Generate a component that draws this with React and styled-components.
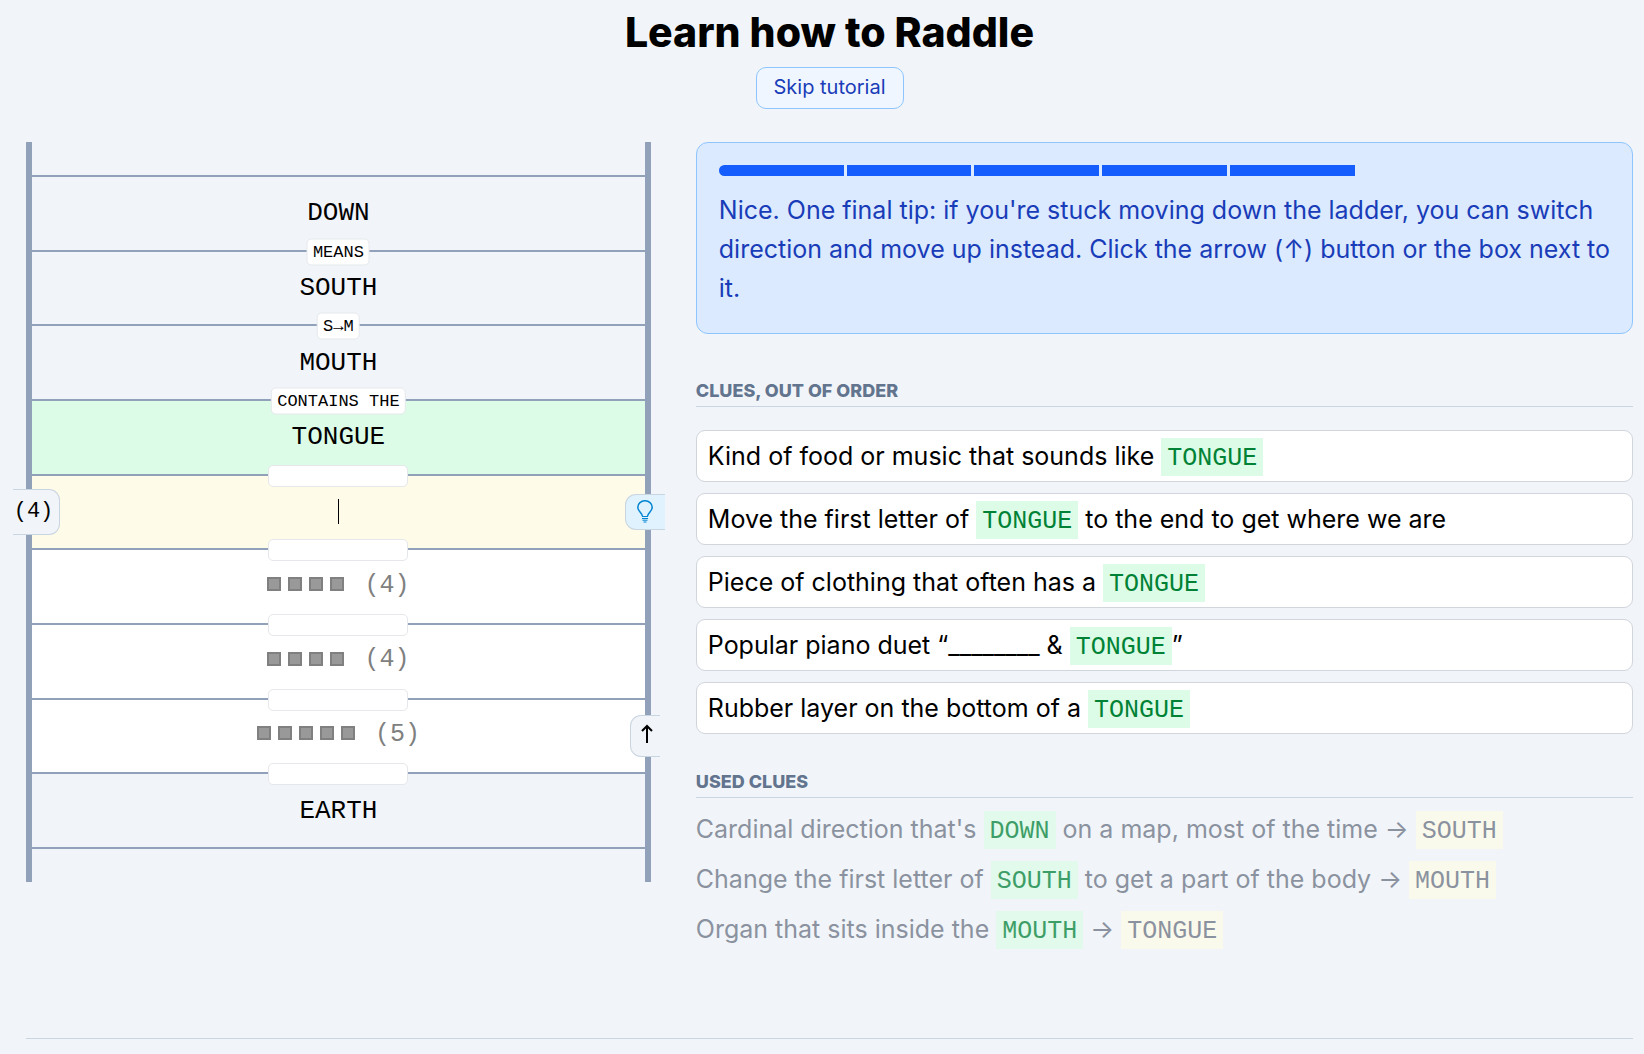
import React from "react";
import styled, { createGlobalStyle, css } from "styled-components";

const sans = `Inter, "Liberation Sans", sans-serif`;
const mono = `"Liberation Mono", monospace`;

const GlobalStyle = createGlobalStyle`
  *, *::before, *::after { box-sizing: border-box; }
  body {
    margin: 0;
    background: #f1f5f9;
    color: #000;
    font-family: ${sans};
  }
`;

const Page = styled.div`
  padding: 8px 11px 0 26px;
`;

const Header = styled.header`
  display: flex;
  flex-direction: column;
  align-items: center;
  gap: 11px;
`;

const Title = styled.h1`
  margin: 0;
  font-size: 41px;
  line-height: 48px;
  font-weight: 800;
`;

const SkipButton = styled.button`
  height: 42px;
  padding: 0 17px 2px;
  border: 1px solid #8ec5ff;
  border-radius: 10px;
  background: #eff6ff;
  color: #193cb8;
  font-family: inherit;
  font-size: 20px;
  line-height: 24px;
`;

const Columns = styled.main`
  display: grid;
  grid-template-columns: 2fr 3fr;
  gap: 45px;
  align-items: start;
  margin-top: 33px;
  padding-bottom: 84px;
  border-bottom: 1px solid #cad5e2;
`;

const Ladder = styled.ol`
  display: grid;
  grid-template-rows: 35px repeat(9, 1fr) 33px;
  height: 740px;
  margin: 0;
  padding: 0;
  border: solid #90a1b9;
  border-width: 0 6px;
  list-style: none;
  font-family: ${mono};
  font-size: 26px;
  line-height: 30px;

  &::before {
    content: "";
    border-bottom: 2px solid #90a1b9;
  }
`;

const rungColors = { plain: "transparent", known: "#dcfce7", active: "#fefce8", blank: "#fff" };

const Rung = styled.li`
  position: relative;
  display: flex;
  align-items: center;
  justify-content: center;
  border-bottom: 2px solid #90a1b9;
  background: ${(p) => rungColors[p.$kind]};
`;

const Relation = styled.span`
  position: absolute;
  top: 0;
  left: 50%;
  transform: translate(-50%, -50%);
  z-index: 1;
  display: block;
  border: 1px solid #e5e7eb;
  border-radius: 5px;
  background: #fff;
  font-size: 17px;
  line-height: 25px;
  white-space: pre;
  ${(p) =>
    p.$empty
      ? css`
          width: 140px;
          height: 22px;
        `
      : css`
          padding: 0 5px;
        `}
`;

const Blank = styled.span`
  display: flex;
  align-items: center;
  gap: 20px;
  padding-bottom: 2px;
  color: #808080;
  font-size: 25px;
`;

const Squares = styled.span`
  display: flex;
  gap: 7px;
  padding-bottom: 3px;
`;

const Square = styled.span`
  width: 14px;
  height: 14px;
  border: 2px solid #808080;
  background: #999;
`;

const Guess = styled.input`
  width: 100%;
  height: 100%;
  border: 0;
  outline: 0;
  background: transparent;
  font: inherit;
  text-align: center;
  text-transform: uppercase;
  caret-color: transparent;
`;

const Caret = styled.span`
  position: absolute;
  left: 50%;
  width: 1px;
  height: 25px;
  background: #000;
`;

const tab = css`
  position: absolute;
  z-index: 2;
  display: flex;
  align-items: center;
  justify-content: center;
  border: 1px solid #cad5e2;
  background: #f1f5f9;
  color: #000;
`;

const LengthTab = styled.span`
  ${tab}
  left: -19px;
  width: 47px;
  height: 46px;
  padding-right: 5px;
  border-left: 0;
  border-radius: 0 11px 11px 0;
  font-size: 22px;
`;

const SideTab = styled.button`
  ${tab}
  padding: 0;
  border-right: 0;
  border-radius: 11px 0 0 11px;
`;

const HintButton = styled(SideTab)`
  right: -20px;
  width: 40px;
  height: 36px;
  background: #dff2fe;
  color: #0084d1;
`;

const DirectionButton = styled(SideTab)`
  right: -15px;
  width: 30px;
  height: 42px;
  padding: 0 0 4px 3px;
`;

const Tip = styled.section`
  padding: 22px 14px 25px 22px;
  border: 1px solid #8ec5ff;
  border-radius: 12px;
  background: #dbeafe;
  color: #193cb8;
`;

const Progress = styled.div`
  display: grid;
  grid-template-columns: repeat(7, 1fr);
  gap: 3px;
  height: 11px;
  margin-right: 8px;
  border-radius: 6px;
  overflow: hidden;
`;

const Step = styled.span`
  background: ${(p) => (p.$done ? "#155dfc" : "transparent")};
`;

const TipText = styled.p`
  margin: 15px 0 0;
  font-size: 25px;
  line-height: 39px;
`;

const SectionTitle = styled.h2`
  margin: ${(p) => (p.$compact ? 36 : 45)}px 0 0;
  padding-bottom: 3px;
  border-bottom: 1px solid #cad5e2;
  color: #62748e;
  font-size: 18px;
  line-height: 24px;
  font-weight: 800;
  text-transform: uppercase;
`;

const ClueList = styled.ul`
  display: grid;
  gap: 11px;
  margin: 23px 0 0;
  padding: 0;
  list-style: none;
  font-size: 25px;
  line-height: 50px;
`;

const Clue = styled.li`
  padding: 0 11px;
  border: 1px solid #d1d5dc;
  border-radius: 9px;
  background: #fff;
`;

const UsedList = styled.ul`
  margin: 6px 0 0;
  padding: 0;
  list-style: none;
  font-size: 25px;
  line-height: 50px;
  color: #6a7282;
  opacity: 0.75;
`;

const Word = styled.span`
  display: inline-block;
  padding: 4px 6px 0;
  background: ${(p) => (p.$answer ? "#fefce8" : "#dcfce7")};
  color: ${(p) => (p.$answer ? "inherit" : "#008236")};
  font-family: ${mono};
  line-height: 34px;
`;

const rungs = [
  { word: "DOWN" },
  { word: "SOUTH", relation: "MEANS" },
  { word: "MOUTH", relation: "S→M" },
  { word: "TONGUE", relation: "CONTAINS THE", kind: "known" },
  { relation: "", kind: "active", size: 4 },
  { relation: "", kind: "blank", size: 4 },
  { relation: "", kind: "blank", size: 4 },
  { relation: "", kind: "blank", size: 5, reverse: true },
  { word: "EARTH", relation: "" },
];

const clues = [
  ["Kind of food or music that sounds like ", ""],
  ["Move the first letter of ", " to the end to get where we are"],
  ["Piece of clothing that often has a ", ""],
  ["Popular piano duet “________ & ", "”"],
  ["Rubber layer on the bottom of a ", ""],
];

const usedClues = [
  ["Cardinal direction that's ", "DOWN", " on a map, most of the time → ", "SOUTH"],
  ["Change the first letter of ", "SOUTH", " to get a part of the body → ", "MOUTH"],
  ["Organ that sits inside the ", "MOUTH", " → ", "TONGUE"],
];

function UpArrow() {
  return (
    <svg width="12" height="20" viewBox="0 0 12 20" fill="none" stroke="currentColor" strokeWidth="2">
      <path d="M6 19V2M1 7l5-5 5 5" />
    </svg>
  );
}

function Bulb() {
  return (
    <svg width="16" height="23" viewBox="0 0 16 23" fill="none" stroke="currentColor">
      <path
        strokeWidth="1.5"
        d="M5.4 16.2c0-3-4.6-4.6-4.6-9A7 6.5 0 0 1 8 .8a7 6.5 0 0 1 7.2 6.4c0 4.4-4.6 6-4.6 9"
      />
      <path d="M5 16.5h6M5 18.5h6M5.5 20.2h5M6.500 22h3" />
    </svg>
  );
}

function RungContent({ rung }) {
  if (rung.kind === "active") {
    return (
      <>
        <LengthTab>({rung.size})</LengthTab>
        <Guess aria-label="Your guess" maxLength={rung.size} />
        <Caret />
        <HintButton type="button" aria-label="Hint">
          <Bulb />
        </HintButton>
      </>
    );
  }
  if (rung.kind === "blank") {
    return (
      <Blank>
        <Squares>
          {Array.from({ length: rung.size }, (_, i) => (
            <Square key={i} />
          ))}
        </Squares>
        ({rung.size})
      </Blank>
    );
  }
  return rung.word;
}

export default function App() {
  return (
    <>
      <GlobalStyle />
      <Page>
        <Header>
          <Title>Learn how to Raddle</Title>
          <SkipButton type="button">Skip tutorial</SkipButton>
        </Header>
        <Columns>
          <Ladder>
            {rungs.map((rung, i) => (
              <Rung key={i} $kind={rung.kind || "plain"}>
                {rung.relation !== undefined && (
                  <Relation $empty={!rung.relation}>{rung.relation}</Relation>
                )}
                <RungContent rung={rung} />
                {rung.reverse && (
                  <DirectionButton type="button" aria-label="Move up">
                    <UpArrow />
                  </DirectionButton>
                )}
              </Rung>
            ))}
          </Ladder>
          <div>
            <Tip>
              <Progress>
                {Array.from({ length: 7 }, (_, i) => (
                  <Step key={i} $done={i < 5} />
                ))}
              </Progress>
              <TipText>
                Nice. One final tip: if you're stuck moving down the ladder, you can switch
                direction and move up instead. Click the arrow (↑) button or the box next to it.
              </TipText>
            </Tip>
            <SectionTitle>Clues, out of order</SectionTitle>
            <ClueList>
              {clues.map(([before, after]) => (
                <Clue key={before}>
                  {before}
                  <Word>TONGUE</Word>
                  {after}
                </Clue>
              ))}
            </ClueList>
            <SectionTitle $compact>Used clues</SectionTitle>
            <UsedList>
              {usedClues.map(([before, from, after, to]) => (
                <li key={from}>
                  {before}
                  <Word>{from}</Word>
                  {after}
                  <Word $answer>{to}</Word>
                </li>
              ))}
            </UsedList>
          </div>
        </Columns>
      </Page>
    </>
  );
}
